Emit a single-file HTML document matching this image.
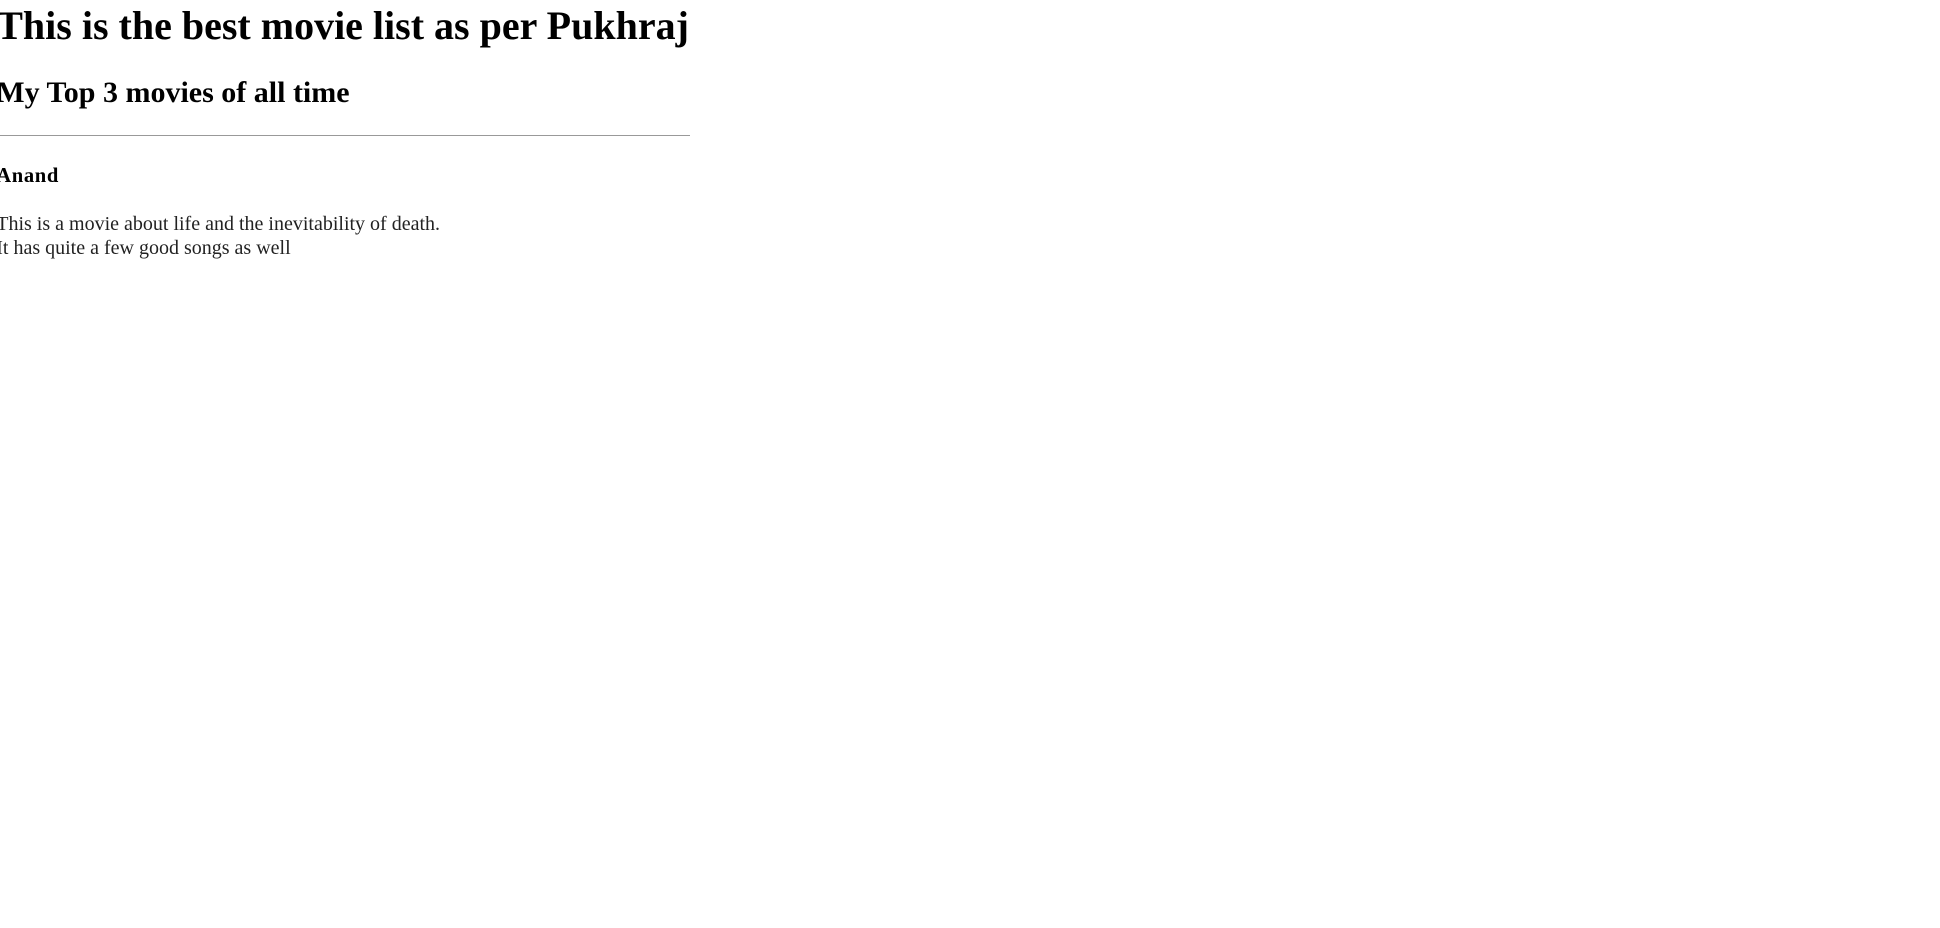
<!DOCTYPE html>
<html><head><meta charset="utf-8"><style>
html,body{margin:0;padding:0;background:#fff;}
body{zoom:1.25;font-family:"Liberation Serif",serif;color:#000;width:555px;margin-left:-3px;}
h1{font-size:32px;margin:2px 0 22px;line-height:37px;}
h2{font-size:24px;margin:20px 0 20px;}
hr{margin:0;border:0;border-top:1px solid #999;height:0;}
h4{font-size:16.5px;margin:23px 0 20px;letter-spacing:0.5px;}
p{font-size:16px;margin:0;line-height:19px;color:#222;}
</style></head><body>
<h1>This is the best movie list as per Pukhraj</h1>
<h2>My Top 3 movies of all time</h2>
<hr>
<h4>Anand</h4>
<p>This is a movie about life and the inevitability of death.<br>It has quite a few good songs as well</p>
</body></html>
